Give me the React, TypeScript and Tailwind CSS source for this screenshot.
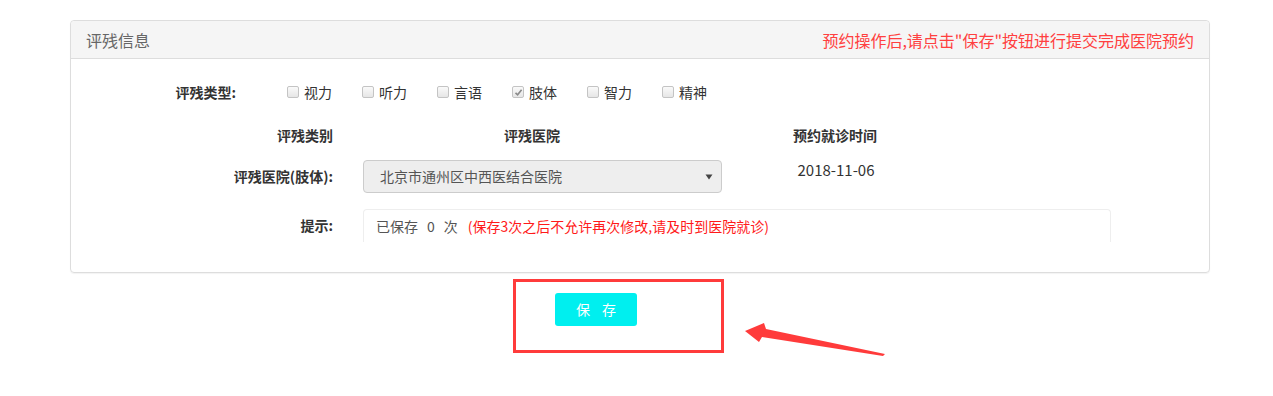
const types = [
  { label: "视力", checked: false },
  { label: "听力", checked: false },
  { label: "言语", checked: false },
  { label: "肢体", checked: true },
  { label: "智力", checked: false },
  { label: "精神", checked: false },
];

const Box = ({ checked }: { checked: boolean }) => (
  <span className="w-[12px] h-[12px] rounded-[2px] border border-[#c4c4c4] bg-gradient-to-b from-[#fafafa] to-[#e6e6e6] flex items-center justify-center">
    {checked && (
      <svg width="9" height="9" viewBox="0 0 9 9">
        <path d="M1.5 4.8 L3.6 6.8 L7.6 1.8" stroke="#8a8a8a" strokeWidth="1.6" fill="none" />
      </svg>
    )}
  </span>
);

const App = () => {
  return (
    <div
      className="relative w-[1273px] h-[396px] bg-white pt-[20px] text-[#333] text-[14px]"
      style={{ fontFamily: '"Noto Sans CJK SC", "Liberation Sans", sans-serif' }}
    >
      <div className="ml-[70px] w-[1140px] border border-[#ddd] rounded-[4px] shadow-[0_1px_1px_rgba(0,0,0,0.05)]">
        <div className="h-[38px] bg-[#f5f5f5] border-b border-[#ddd] rounded-t-[4px] px-[15px] flex items-center justify-between">
          <span className="text-[16px] text-[#666]">评残信息</span>
          <span className="text-[16px] text-[#ff4040]">预约操作后,请点击"保存"按钮进行提交完成医院预约</span>
        </div>

        <div className="pt-[23px] pb-[30px]">
          <div className="h-[20px] flex items-center">
            <div className="w-[165px] text-right font-bold leading-[20px]">评残类型:</div>
            <div className="ml-[51px] flex">
              {types.map((t) => (
                <div key={t.label} className="w-[75px] flex items-center gap-[5px] leading-[20px]">
                  <Box checked={t.checked} />
                  <span>{t.label}</span>
                </div>
              ))}
            </div>
          </div>

          <div className="mt-[23px] h-[20px] flex items-center font-bold leading-[20px]">
            <div className="w-[262px] text-right">评残类别</div>
            <div className="w-[398px] text-center">评残医院</div>
            <div className="w-[208px] text-center">预约就诊时间</div>
          </div>

          <div className="mt-[15px] flex items-start">
            <div className="w-[262px] h-[33px] flex items-center justify-end font-bold">评残医院(肢体):</div>
            <div className="ml-[30px] w-[359px] h-[33px] bg-[#eee] border border-[#ccc] rounded-[4px] pl-[16px] pr-[8px] flex items-center justify-between text-[#555]">
              <span>北京市通州区中西医结合医院</span>
              <svg width="8" height="6" viewBox="0 0 8 6">
                <path d="M0.5 0.5 L7.5 0.5 L4 5.5 Z" fill="#444" />
              </svg>
            </div>
            <div className="w-[228px] text-center leading-[20px] text-[15px] text-[#333]">2018-11-06</div>
          </div>

          <div className="mt-[16px] flex items-start">
            <div className="w-[262px] h-[33px] flex items-center justify-end font-bold">提示:</div>
            <div className="ml-[30px] w-[748px] h-[33px] border border-b-0 border-[#eee] rounded-t-[4px] pl-[12px] flex items-center">
              <span className="text-[#555]">已保存</span>
              <span className="mx-[9px] text-[#555]">0</span>
              <span className="text-[#555]">次</span>
              <span className="ml-[10px] text-[#ff1a1a]">(保存3次之后不允许再次修改,请及时到医院就诊)</span>
            </div>
          </div>
        </div>
      </div>

      <div className="mt-[6px] ml-[513px] w-[211px] h-[74px] border-[3px] border-[#ff3b3b] pt-[11px] pl-[39px]">
        <button className="w-[82px] h-[33px] bg-[#00efef] rounded-[3px] text-white text-[14px] [word-spacing:9px]">
          保 存
        </button>
      </div>

      <svg className="absolute left-[740px] top-[318px]" width="150" height="42" viewBox="0 0 150 42">
        <polygon points="5,13 24,5 26,11 145,36 143,38 22,19 19,24" fill="#ff3b3b" />
      </svg>
    </div>
  );
};

export default App;
